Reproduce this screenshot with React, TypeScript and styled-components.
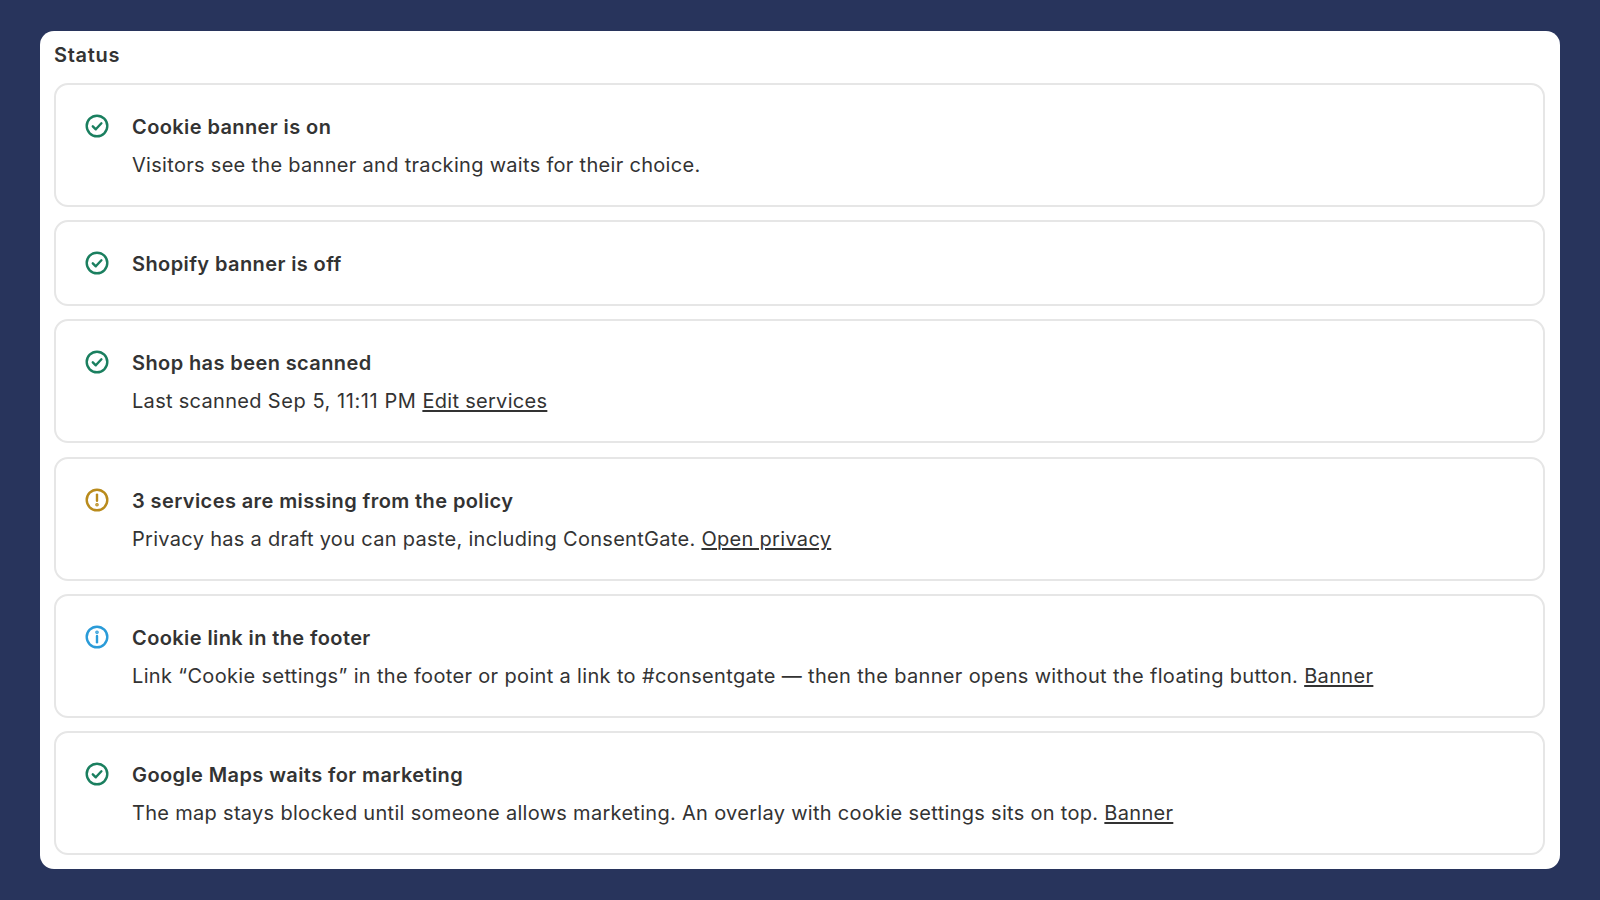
import React from "react";
import styled, { createGlobalStyle } from "styled-components";

const Global = createGlobalStyle`
  html, body { margin: 0; padding: 0; background: #28345c; }
  body { font-family: Inter, "Liberation Sans", sans-serif; -webkit-font-smoothing: antialiased; }
`;

const Page = styled.div`
  width: 1600px;
  height: 900px;
  padding: 31px 40px;
  box-sizing: border-box;
  overflow: hidden;
`;

const Panel = styled.section`
  background: #fff;
  border-radius: 14px;
  height: 838px;
  box-sizing: border-box;
  padding: 10px 15px 14px 14px;
`;

const Title = styled.h2`
  margin: 0 0 14px;
  font-size: 20px;
  line-height: 28px;
  font-weight: 570;
  letter-spacing: 0.7px;
  color: #333;
`;

const List = styled.div`
  display: flex;
  flex-direction: column;
  gap: 13.4px;
`;

const Card = styled.article`
  display: flex;
  gap: 21px;
  box-sizing: border-box;
  padding: 28px 27px 25.5px;
  border: 2px solid #e6e6e6;
  border-radius: 14px;
`;

const IconBox = styled.div<{ $color: string }>`
  width: 28px;
  height: 28px;
  flex: none;
  margin-top: -1px;
  color: ${(p) => p.$color};
  svg { display: block; }
`;

const Body = styled.div`
  display: flex;
  flex-direction: column;
  gap: 10px;
`;

const Heading = styled.div`
  font-size: 20px;
  line-height: 28px;
  font-weight: 570;
  letter-spacing: 0.4px;
  color: #333;
`;

const Detail = styled.div<{ $spacing: number }>`
  font-size: 20px;
  line-height: 28px;
  padding-bottom: 0.5px;
  font-weight: 400;
  letter-spacing: ${(p) => p.$spacing}px;
  color: #333;
`;

const Stamp = styled.span`
  letter-spacing: 0.57px;
`;

const Link = styled.a`
  color: #333;
  text-decoration: underline;
  text-underline-offset: 2px;
`;

type Kind = "ok" | "warn" | "info";

const colors: Record<Kind, string> = { ok: "#1a7f5f", warn: "#b98b1c", info: "#2a9bd8" };

const StatusIcon = ({ kind }: { kind: Kind }) => (
  <IconBox $color={colors[kind]}>
    <svg width="28" height="28" viewBox="0 0 28 28" fill="none" stroke="currentColor" strokeWidth="2.4" strokeLinecap="round" strokeLinejoin="round">
      <circle cx="14" cy="14" r="10.3" />
      {kind === "ok" && <path d="M9.8 14.3l3 3 5.6-6" />}
      {kind === "warn" && (
        <>
          <path d="M14 8.6v6.2" />
          <circle cx="14" cy="18.8" r="0.6" fill="currentColor" />
        </>
      )}
      {kind === "info" && (
        <>
          <path d="M14 13v6.2" />
          <circle cx="14" cy="9.2" r="0.6" fill="currentColor" />
        </>
      )}
    </svg>
  </IconBox>
);

type Item = { kind: Kind; title: string; text?: string; stamp?: string; link?: string; spacing?: number };

const items: Item[] = [
  { kind: "ok", title: "Cookie banner is on", text: "Visitors see the banner and tracking waits for their choice." },
  { kind: "ok", title: "Shopify banner is off" },
  { kind: "ok", title: "Shop has been scanned", text: "Last scanned ", stamp: "Sep 5, 11:11 PM", link: "Edit services" },
  { kind: "warn", title: "3 services are missing from the policy", text: "Privacy has a draft you can paste, including ConsentGate.", link: "Open privacy" },
  { kind: "info", title: "Cookie link in the footer", text: "Link “Cookie settings” in the footer or point a link to #consentgate — then the banner opens without the floating button.", link: "Banner", spacing: 0.34 },
  { kind: "ok", title: "Google Maps waits for marketing", text: "The map stays blocked until someone allows marketing. An overlay with cookie settings sits on top.", link: "Banner" },
];

export default function App() {
  return (
    <Page>
      <Global />
      <Panel>
        <Title>Status</Title>
        <List>
          {items.map((it) => (
            <Card key={it.title}>
              <StatusIcon kind={it.kind} />
              <Body>
                <Heading>{it.title}</Heading>
                {it.text && (
                  <Detail $spacing={it.spacing ?? 0.3}>
                    {it.text}
                    {it.stamp && <Stamp>{it.stamp}</Stamp>}
                    {it.link && (
                      <>
                        {" "}
                        <Link href="#">{it.link}</Link>
                      </>
                    )}
                  </Detail>
                )}
              </Body>
            </Card>
          ))}
        </List>
      </Panel>
    </Page>
  );
}
